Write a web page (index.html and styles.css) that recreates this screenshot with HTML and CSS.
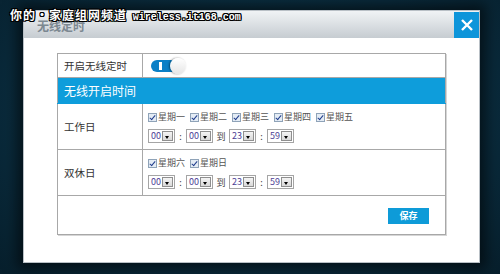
FILE: index.html
```html
<!DOCTYPE html>
<html lang="zh-CN">
<head>
  <meta charset="UTF-8">
  <meta name="viewport" content="width=device-width, initial-scale=1.0">
  <title>无线定时</title>
  <link rel="stylesheet" href="styles.css">
</head>
<body>
  <div class="watermark">你的・家庭组网频道 <span class="wm-url">wireless.it168.com</span></div>

  <div class="dialog">
    <div class="dialog-head">
      <span class="dialog-title">无线定时</span>
      <button class="close-btn">
        <svg width="14" height="14" viewBox="0 0 14 14"><path d="M2 2 L12 12 M12 2 L2 12" stroke="#fff" stroke-width="2.4" fill="none"/></svg>
      </button>
    </div>

    <div class="dialog-body">
      <table class="timer">
        <tr class="row-switch">
          <td class="label">开启无线定时</td>
          <td>
            <span class="toggle"><span class="toggle-mark"></span><span class="toggle-knob"></span></span>
          </td>
        </tr>
        <tr class="row-head">
          <td colspan="2">无线开启时间</td>
        </tr>
        <tr class="row-days">
          <td class="label">工作日</td>
          <td>
            <div class="days">
              <label class="day"><span class="check"></span>星期一</label>
              <label class="day"><span class="check"></span>星期二</label>
              <label class="day"><span class="check"></span>星期三</label>
              <label class="day"><span class="check"></span>星期四</label>
              <label class="day"><span class="check"></span>星期五</label>
            </div>
            <div class="times">
              <span class="pick"><span class="pick-val">00</span><span class="pick-arrow"></span></span>
              <span class="sep">:</span>
              <span class="pick"><span class="pick-val">00</span><span class="pick-arrow"></span></span>
              <span class="sep to">到</span>
              <span class="pick"><span class="pick-val">23</span><span class="pick-arrow"></span></span>
              <span class="sep">:</span>
              <span class="pick"><span class="pick-val">59</span><span class="pick-arrow"></span></span>
            </div>
          </td>
        </tr>
        <tr class="row-days">
          <td class="label">双休日</td>
          <td>
            <div class="days">
              <label class="day"><span class="check"></span>星期六</label>
              <label class="day"><span class="check"></span>星期日</label>
            </div>
            <div class="times">
              <span class="pick"><span class="pick-val">00</span><span class="pick-arrow"></span></span>
              <span class="sep">:</span>
              <span class="pick"><span class="pick-val">00</span><span class="pick-arrow"></span></span>
              <span class="sep to">到</span>
              <span class="pick"><span class="pick-val">23</span><span class="pick-arrow"></span></span>
              <span class="sep">:</span>
              <span class="pick"><span class="pick-val">59</span><span class="pick-arrow"></span></span>
            </div>
          </td>
        </tr>
        <tr class="row-save">
          <td colspan="2"><button class="save-btn">保存</button></td>
        </tr>
      </table>
    </div>
  </div>
</body>
</html>
```

FILE: styles.css
```css
*{
  box-sizing: border-box;
  font-family: "Noto Sans CJK SC", "Liberation Sans", sans-serif;
}
html, body{
  margin: 0;
  height: 100%;
}
body{
  background: radial-gradient(ellipse at 50% 40%, #0d3a50 0%, #0a2c3e 60%, #071f2c 100%);
  padding: 10px 20px 0 23px;
  position: relative;
  overflow: hidden;
}
.watermark{
  position: absolute;
  top: 7px;
  left: 10px;
  z-index: 5;
  color: #fff;
  font-size: 12px;
  letter-spacing: 1px;
  line-height: 16px;
  font-weight: bold;
  white-space: nowrap;
  text-shadow: 1px 0 0 #000, -1px 0 0 #000, 0 1px 0 #000, 0 -1px 0 #000, 1px 1px 0 #000, -1px -1px 0 #000, 1px -1px 0 #000, -1px 1px 0 #000;
}
.wm-url{
  font-family: "Liberation Mono", monospace;
  font-size: 10px;
  letter-spacing: 0;
  margin-left: 2px;
}
.dialog{
  width: 457px;
  height: 253px;
  background: #fff;
  border: 1px solid #b9c0c6;
  box-shadow: 0 0 12px 6px rgba(0,0,0,0.55);
  display: flex;
  flex-direction: column;
}
.dialog-head{
  height: 27px;
  background: linear-gradient(#f0f3f5, #c6ccd1);
  display: flex;
  align-items: center;
  justify-content: space-between;
  padding-left: 13px;
}
.dialog-title{
  color: #7c8891;
  font-size: 12px;
  font-weight: bold;
  line-height: 14px;
  padding-top: 2px;
}
.close-btn{
  width: 25px;
  height: 26px;
  margin-top: 1px;
  border: 0;
  padding: 0;
  background: #0d95da;
  display: flex;
  align-items: center;
  justify-content: center;
}
.dialog-body{
  padding: 15px 0 0 33px;
}
.timer{
  width: 389px;
  border-collapse: collapse;
  border: 1px solid #9c9c9c;
  box-shadow: 1px 1px 0 #d6d6d6;
}
.timer td{
  border: 1px solid #a8a8a8;
  padding: 0 0 0 6px;
  font-size: 10.5px;
  color: #333;
  vertical-align: middle;
}
.timer td.label{
  width: 85px;
}
.row-switch td{
  height: 24px;
}
.row-switch td + td{
  padding-left: 8px;
}
.toggle{
  display: block;
  position: relative;
  width: 35px;
  height: 16px;
  margin-top: 1px;
}
.toggle::before{
  content: "";
  position: absolute;
  left: 0;
  top: 2px;
  width: 30px;
  height: 12px;
  border-radius: 6px;
  background: #0a7fc6;
}
.toggle-mark{
  position: absolute;
  left: 8px;
  top: 4px;
  width: 3px;
  height: 8px;
  background: #fff;
}
.toggle-knob{
  position: absolute;
  right: 0;
  top: 0;
  width: 16px;
  height: 16px;
  border-radius: 50%;
  background: linear-gradient(#ffffff, #e6e6e6);
  box-shadow: -1px 0 2px rgba(0,0,0,0.45);
}
.row-head td{
  height: 26px;
  background: #0e9ddb;
  color: #fff;
  font-size: 12px;
  border-color: #0e9ddb #a8a8a8;
}
.row-days td{
  height: 46px;
}
.row-days td + td{
  padding-left: 5px;
}
.days{
  display: flex;
  gap: 5px;
  height: 14px;
  align-items: center;
}
.day{
  display: flex;
  align-items: center;
  font-size: 9px;
  line-height: 12px;
  color: #555;
}
.check{
  width: 9px;
  height: 9px;
  margin-right: 1px;
  border: 1px solid #8fa3b8;
  background: #e4ecf5;
  position: relative;
}
.check::after{
  content: "";
  position: absolute;
  left: 2px;
  top: 0;
  width: 2px;
  height: 5px;
  border: solid #1f3c8c;
  border-width: 0 1.5px 1.5px 0;
  transform: rotate(40deg);
}
.times{
  display: flex;
  align-items: center;
  margin-top: 5px;
  height: 14px;
}
.pick{
  display: flex;
  width: 27px;
  height: 14px;
  border: 1px solid #a5a5a5;
  background: #fff;
}
.pick-val{
  flex: 1;
  font-size: 9px;
  line-height: 12px;
  color: #4b3e94;
  padding-left: 2px;
}
.pick-arrow{
  width: 11px;
  margin: 1px;
  background: linear-gradient(#f4f4f4, #d9d9d9);
  border: 1px solid #8f8f8f;
  position: relative;
}
.pick-arrow::after{
  content: "";
  position: absolute;
  left: 2px;
  top: 4px;
  border-left: 2.5px solid transparent;
  border-right: 2.5px solid transparent;
  border-top: 3px solid #000;
}
.sep{
  font-size: 9px;
  color: #444;
  width: 11px;
  text-align: center;
}
.sep.to{
  width: 16px;
}
.row-save td{
  height: 39px;
  text-align: right;
  padding-right: 16px;
}
.save-btn{
  width: 41px;
  height: 16px;
  border: 0;
  padding: 0;
  background: #0e9bd8;
  color: #fff;
  font-size: 9px;
  font-weight: bold;
  line-height: 16px;
}
```
